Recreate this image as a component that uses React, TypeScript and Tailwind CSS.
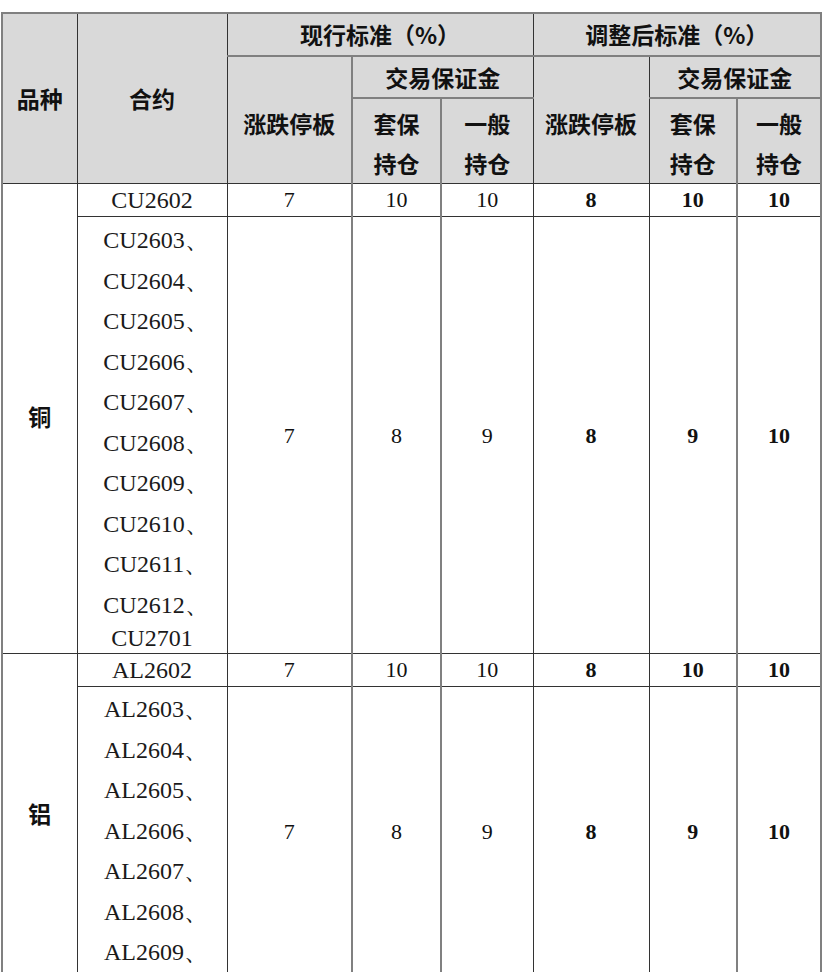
const serif = "font-['Liberation_Serif','Times_New_Roman',serif] text-[22px] text-[#111]";
const code = "font-['Liberation_Serif','Times_New_Roman',serif] text-[24px] text-[#1a1a1a]";
const hei = "font-['Noto_Sans_CJK_SC','Noto_Sans',sans-serif] font-bold text-[23px] text-[#111]";

const cuCodes = [
  "CU2603、",
  "CU2604、",
  "CU2605、",
  "CU2606、",
  "CU2607、",
  "CU2608、",
  "CU2609、",
  "CU2610、",
  "CU2611、",
  "CU2612、",
];

const alCodes = [
  "AL2603、",
  "AL2604、",
  "AL2605、",
  "AL2606、",
  "AL2607、",
  "AL2608、",
  "AL2609、",
];

const CodeList = ({ codes, last, pad }: { codes: string[]; last?: string; pad: string }) => (
  <div className={`flex flex-col items-center ${pad}`}>
    {codes.map((c) => (
      <div key={c} className="leading-[40.5px] pl-[8px]">
        {c}
      </div>
    ))}
    {last && <div className="leading-[26px]">{last}</div>}
  </div>
);

const Group = ({
  name,
  first,
  codes,
  last,
  height,
  pad,
}: {
  name: string;
  first: string;
  codes: string[];
  last?: string;
  height: string;
  pad: string;
}) => (
  <>
    <tr className="h-[33px]">
      <td rowSpan={2} className={`${hei} border border-[#333] text-center pb-[4px]`}>
        {name}
      </td>
      <td className={`${code} border border-[#333] text-center leading-none`}>{first}</td>
      <td className={`${serif} border-y border-l border-[#333] border-r-2 border-r-[#808080] text-center leading-none`}>7</td>
      <td className={`${serif} border border-[#333] border-r-2 border-r-[#808080] text-center leading-none`}>10</td>
      <td className={`${serif} border border-[#333] text-center leading-none`}>10</td>
      <td className={`${serif} border border-[#333] text-center font-bold leading-none`}>8</td>
      <td className={`${serif} border border-[#333] border-r-2 border-r-[#808080] text-center font-bold leading-none`}>10</td>
      <td className={`${serif} border border-[#333] text-center font-bold leading-none`}>10</td>
    </tr>
    <tr className={height}>
      <td className={`${code} border border-[#333] align-top`}>
        <CodeList codes={codes} last={last} pad={pad} />
      </td>
      <td className={`${serif} border border-[#333] border-r-2 border-r-[#808080] text-center`}>7</td>
      <td className={`${serif} border border-[#333] border-r-2 border-r-[#808080] text-center`}>8</td>
      <td className={`${serif} border border-[#333] text-center`}>9</td>
      <td className={`${serif} border border-[#333] text-center font-bold`}>8</td>
      <td className={`${serif} border border-[#333] border-r-2 border-r-[#808080] text-center font-bold`}>9</td>
      <td className={`${serif} border border-[#333] text-center font-bold`}>10</td>
    </tr>
  </>
);

export default function App() {
  return (
    <div className="bg-white min-h-screen pt-[12px] pl-[1px]">
      <table className="table-fixed border-collapse w-[819px] border-2 border-[#808080]">
        <colgroup>
          <col className="w-[75px]" />
          <col className="w-[150px]" />
          <col className="w-[125px]" />
          <col className="w-[89px]" />
          <col className="w-[92px]" />
          <col className="w-[116px]" />
          <col className="w-[88px]" />
          <col className="w-[84px]" />
        </colgroup>
        <thead className="bg-[#d9d9d9]">
          <tr className="h-[43px]">
            <th rowSpan={3} className={`${hei} border border-[#333]`}>品种</th>
            <th rowSpan={3} className={`${hei} border border-[#333]`}>合约</th>
            <th colSpan={3} className={`${hei} border border-[#333] border-b-2 border-b-[#808080] leading-none`}>
              现行标准（%）
            </th>
            <th colSpan={3} className={`${hei} border border-[#333] border-b-2 border-b-[#808080] leading-none`}>
              调整后标准（%）
            </th>
          </tr>
          <tr className="h-[42px]">
            <th rowSpan={2} className={`${hei} border border-[#333] border-r-2 border-r-[#808080] pt-[6px]`}>涨跌停板</th>
            <th colSpan={2} className={`${hei} border border-[#333] border-b-2 border-b-[#808080] leading-none`}>交易保证金</th>
            <th rowSpan={2} className={`${hei} border border-[#333] pt-[6px]`}>涨跌停板</th>
            <th colSpan={2} className={`${hei} border border-[#333] border-b-2 border-b-[#808080] leading-none`}>交易保证金</th>
          </tr>
          <tr className="h-[84px]">
            <th className={`${hei} border border-[#333] border-r-2 border-r-[#808080] leading-[40px] pt-[4px]`}>
              套保
              <br />
              持仓
            </th>
            <th className={`${hei} border border-[#333] leading-[40px] pt-[4px]`}>
              一般
              <br />
              持仓
            </th>
            <th className={`${hei} border border-[#333] border-r-2 border-r-[#808080] leading-[40px] pt-[4px]`}>
              套保
              <br />
              持仓
            </th>
            <th className={`${hei} border border-[#333] leading-[40px] pt-[4px]`}>
              一般
              <br />
              持仓
            </th>
          </tr>
        </thead>
        <tbody>
          <Group name="铜" first="CU2602" codes={cuCodes} last="CU2701" height="h-[437px]" pad="pt-[3px]" />
          <Group name="铝" first="AL2602" codes={alCodes} height="h-[290px]" pad="pt-[2px]" />
        </tbody>
      </table>
    </div>
  );
}
